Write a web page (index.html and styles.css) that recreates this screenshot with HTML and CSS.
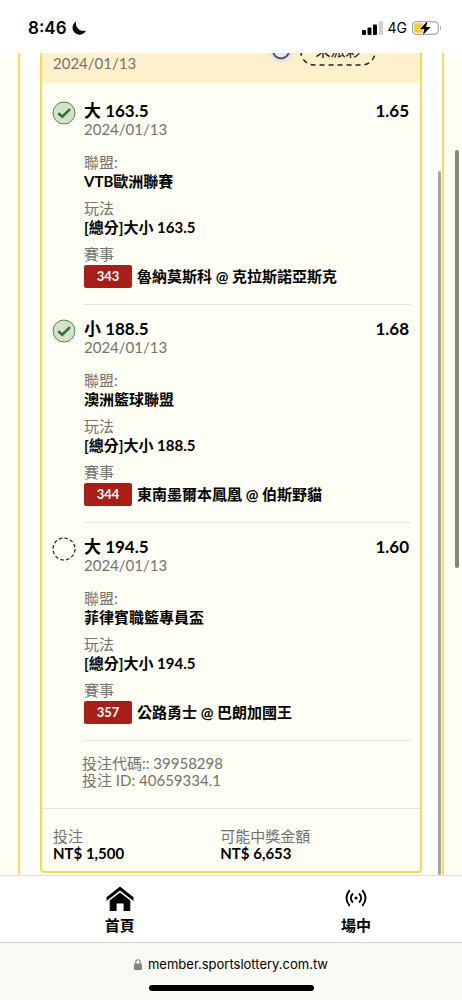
FILE: index.html
```html
<!DOCTYPE html>
<html lang="zh-Hant">
<head>
<meta charset="utf-8">
<meta name="viewport" content="width=device-width, initial-scale=1">
<title>投注紀錄</title>
<link rel="stylesheet" href="styles.css">
</head>
<body>
<header class="status">
  <div class="clock">8:46
    <svg class="moon" viewBox="0 0 14 14" aria-hidden="true"><path d="M4.200.5A7 7 0 1 0 13.900 9.600C9 11.500 2.500 7 4.200.5Z"/></svg>
  </div>
  <div class="signals">
    <svg class="bars" viewBox="0 0 21 14" aria-hidden="true"><rect x="0" y="9" width="4" height="5" rx="1"/><rect x="5.500" y="6.500" width="4" height="7.500" rx="1"/><rect x="11" y="3.500" width="4" height="10.500" rx="1"/><rect x="17" y="0" width="4" height="14" rx="1" fill="#d0d0d0"/></svg>
    <span class="network">4G</span>
    <svg class="battery" viewBox="0 0 30 16" aria-hidden="true"><rect x=".6" y="1.600" width="25.800" height="12.800" rx="3.800" fill="#fff" stroke="#a9a9a9" stroke-width="1.200"/><path d="M4.500 3.200H11V12.800H4.500A2.300 2.300 0 0 1 2.200 10.500V5.500A2.300 2.300 0 0 1 4.500 3.200Z" fill="#f6c93b"/><path d="M28 5.500Q30.200 8 28 10.500Z" fill="#a9a9a9"/><path d="M15.600.8 7.800 9.200H12.300L10.800 15.200 18.700 6.900H14.100Z" stroke="#fff" stroke-width="1.600" paint-order="stroke"/></svg>
  </div>
</header>

<main class="page">
  <div class="frame">
    <article class="ticket">
      <header class="ticket-head">
        <time class="muted" datetime="2024-01-13">2024/01/13</time>
        <div class="head-state">
          <svg class="ring" viewBox="0 0 26 26" aria-hidden="true"><circle cx="13" cy="12" r="12" fill="#e3e6ea"/><circle cx="13" cy="11.500" r="8" fill="none" stroke="#4e535a" stroke-width="2"/></svg>
          <div class="pill"><svg class="pill-line" aria-hidden="true"><rect x="1" y="1" rx="13"/></svg>未派彩</div>
        </div>
      </header>

      <div class="legs">
        <section class="leg">
          <svg class="mark" viewBox="0 0 24 24" aria-label="中獎"><circle cx="12" cy="12" r="11" fill="#d3e2c9" stroke="#4d8a47"/><path d="m6.300 12.200 4 3.500 7.700-7.600" fill="none" stroke="#2f7429" stroke-width="2.700"/></svg>
          <div class="leg-body">
            <div class="leg-title"><h2>大 163.5</h2><strong>1.65</strong></div>
            <time class="muted" datetime="2024-01-13">2024/01/13</time>
            <dl class="facts">
              <div><dt>聯盟:</dt><dd>VTB歐洲聯賽</dd></div>
              <div><dt>玩法</dt><dd>[總分]大小 163.5</dd></div>
              <div><dt>賽事</dt><dd class="match"><span class="badge">343</span>魯納莫斯科 @ 克拉斯諾亞斯克</dd></div>
            </dl>
          </div>
        </section>

        <section class="leg">
          <svg class="mark" viewBox="0 0 24 24" aria-label="中獎"><circle cx="12" cy="12" r="11" fill="#d3e2c9" stroke="#4d8a47"/><path d="m6.300 12.200 4 3.500 7.700-7.600" fill="none" stroke="#2f7429" stroke-width="2.700"/></svg>
          <div class="leg-body">
            <div class="leg-title"><h2>小 188.5</h2><strong>1.68</strong></div>
            <time class="muted" datetime="2024-01-13">2024/01/13</time>
            <dl class="facts">
              <div><dt>聯盟:</dt><dd>澳洲籃球聯盟</dd></div>
              <div><dt>玩法</dt><dd>[總分]大小 188.5</dd></div>
              <div><dt>賽事</dt><dd class="match"><span class="badge">344</span>東南墨爾本鳳凰 @ 伯斯野貓</dd></div>
            </dl>
          </div>
        </section>

        <section class="leg">
          <svg class="mark" viewBox="0 0 24 24" aria-label="未開獎"><circle cx="12" cy="12" r="11" fill="none" stroke="#222" stroke-width="1.200" stroke-dasharray="3.600 2.159"/></svg>
          <div class="leg-body">
            <div class="leg-title"><h2>大 194.5</h2><strong>1.60</strong></div>
            <time class="muted" datetime="2024-01-13">2024/01/13</time>
            <dl class="facts">
              <div><dt>聯盟:</dt><dd>菲律賓職籃專員盃</dd></div>
              <div><dt>玩法</dt><dd>[總分]大小 194.5</dd></div>
              <div><dt>賽事</dt><dd class="match"><span class="badge">357</span>公路勇士 @ 巴朗加國王</dd></div>
            </dl>
          </div>
        </section>
      </div>

      <div class="codes">
        <p>投注代碼:: 39958298</p>
        <p>投注 ID: 40659334.1</p>
      </div>

      <dl class="totals">
        <div><dt>投注</dt><dd>NT$ 1,500</dd></div>
        <div><dt>可能中獎金額</dt><dd>NT$ 6,653</dd></div>
      </dl>
    </article>
  </div>
  <div class="thumb thumb-inner"></div>
  <div class="thumb thumb-outer"></div>
</main>

<nav class="tabs">
  <a href="#home" class="tab">
    <svg class="icon-home" viewBox="0 0 28 26" aria-hidden="true"><path d="M14 .5 27.500 11.300V15L14 4.600.5 15V11.300Z"/><path d="M14 6.600 24.300 14.500V25H17.600V17.500H10.600V25H3.700V14.500Z"/></svg>
    <span>首頁</span>
  </a>
  <a href="#live" class="tab">
    <svg class="icon-live" viewBox="0 0 22 18" aria-hidden="true"><circle cx="11" cy="9" r="1.600"/><g fill="none" stroke="#000" stroke-width="1.800"><path d="M4.700 1.200Q-1.800 9 4.700 16.800M17.300 1.200Q23.800 9 17.300 16.800M8 4.500Q3.600 9 8 13.500M14 4.500Q18.400 9 14 13.500"/></g></svg>
    <span>場中</span>
  </a>
</nav>

<footer class="browser">
  <div class="address">
    <svg class="lock" viewBox="0 0 8 11" aria-hidden="true"><rect y="4.500" width="8" height="6.500" rx="1.200" fill="#85847f"/><path d="M1.800 5V3a2.200 2.200 0 0 1 4.400 0V5" fill="none" stroke="#85847f" stroke-width="1.100"/></svg>
    <span>member.sportslottery.com.tw</span>
  </div>
  <div class="home-bar"></div>
</footer>
</body>
</html>
```

FILE: styles.css
```css
* {
  box-sizing: border-box;
}

body {
  margin: 0;
  height: 100vh;
  display: flex;
  flex-direction: column;
  background: #fff;
  color: #000;
  font-family: Lato, "Noto Sans CJK TC", sans-serif;
  font-size: 15px;
  line-height: 18px;
}

h2, p, dl, dd {
  margin: 0;
}

svg {
  display: block;
  flex: none;
}

/* Status bar */
.status {
  flex: none;
  height: 53px;
  padding: 3px 20px 0 28px;
  display: flex;
  align-items: center;
  justify-content: space-between;
  font-family: Inter, sans-serif;
}

.clock {
  display: flex;
  align-items: center;
  gap: 5px;
  font-size: 17px;
  font-weight: 600;
}

.moon {
  width: 14px;
  height: 14px;
}

.signals {
  display: flex;
  align-items: center;
  gap: 5px;
}

.bars {
  width: 21px;
  height: 14px;
}

.network {
  font-size: 14px;
}

.battery {
  width: 30px;
  height: 16px;
}

/* Scrolled page, resting at its end */
.page {
  position: relative;
  flex: 1;
  min-height: 0;
  overflow: hidden;
  display: flex;
  flex-direction: column;
  justify-content: flex-end;
  padding: 0 18px;
  background: #fefef4;
}

.frame {
  flex: none;
  padding: 0 20px 2px;
  background: #fff;
  border: solid #f5dc60;
  border-width: 0 2px;
}

.ticket {
  overflow: hidden;
  background: #fefef4;
  border: 2px solid #f5da55;
  border-radius: 4px;
}

.ticket-head {
  height: 64px;
  padding: 0 44px 11px 11px;
  display: flex;
  align-items: flex-end;
  justify-content: space-between;
  background: #fdf0cb;
}

.head-state {
  display: flex;
  align-items: center;
  gap: 6px;
  padding-bottom: 6px;
}

.ring {
  width: 26px;
  height: 26px;
}

.pill {
  position: relative;
  width: 76px;
  height: 28px;
  line-height: 25px;
  text-align: center;
}

.pill-line {
  position: absolute;
  inset: 0;
  width: 100%;
  height: 100%;
}

.pill-line rect {
  width: calc(100% - 2px);
  height: calc(100% - 2px);
  fill: none;
  stroke: #222;
  stroke-width: 1.5;
  stroke-dasharray: 5 4;
}

.muted, dt, .codes {
  color: #73736e;
}

.muted {
  display: block;
}

/* Selections */
.legs {
  padding: 4px 9px 0 10px;
}

.leg {
  display: flex;
  gap: 8px;
}

.mark {
  width: 24px;
  height: 24px;
  margin-top: 14px;
}

.leg-body {
  flex: 1;
  padding: 14px 0 16px;
  border-bottom: 1px solid #e4e4dd;
}

.leg-title {
  display: flex;
  justify-content: space-between;
  padding-right: 2px;
  line-height: 19px;
}

.leg-title h2, .leg-title strong {
  font-size: 17px;
  font-weight: 700;
}

.facts {
  display: grid;
  gap: 8px;
  margin-top: 15px;
}

dd {
  font-weight: 700;
}

.facts dd {
  line-height: 20px;
}

.facts .match {
  display: flex;
  align-items: center;
  gap: 5px;
  margin-top: 2px;
  line-height: 23px;
}

.badge {
  width: 48px;
  border-radius: 2px;
  background: #a81e19;
  color: #fff;
  font-size: 13px;
  text-align: center;
}

.codes {
  padding: 14px 40px 19px;
  line-height: 17px;
}

.totals {
  display: grid;
  grid-template-columns: 47% 53%;
  padding: 19px 11px 9px;
  border-top: 1px solid #e4e4dd;
  line-height: 17px;
}

/* Scroll thumbs */
.thumb {
  position: absolute;
  border-radius: 2px;
}

.thumb-inner {
  top: 118px;
  right: 21px;
  bottom: 0;
  width: 3px;
  background: #a4a4a4;
}

.thumb-outer {
  top: 97px;
  right: 3px;
  width: 4px;
  height: 418px;
  background: #858580;
}

/* Bottom tabs */
.tabs {
  flex: none;
  display: flex;
  justify-content: space-between;
  padding: 10px 16% 8px 19%;
  border-top: 1px solid #dededc;
}

.tab {
  width: 64px;
  display: flex;
  flex-direction: column;
  align-items: center;
  justify-content: space-between;
  gap: 4px;
  color: #000;
  font-weight: 700;
  text-decoration: none;
}

.icon-home {
  width: 28px;
  height: 26px;
}

.icon-live {
  width: 22px;
  height: 18px;
  margin-top: 3px;
}

/* Browser bar */
.browser {
  flex: none;
  height: 58px;
  padding-top: 12px;
  display: flex;
  flex-direction: column;
  align-items: center;
  gap: 12px;
  background: #faf9f3;
  border-top: 1px solid #d5d4cf;
}

.address {
  display: flex;
  align-items: center;
  gap: 6px;
  font-family: Inter, sans-serif;
  font-size: 13px;
}

.lock {
  width: 8px;
  height: 11px;
}

.home-bar {
  width: 165px;
  height: 6px;
  border-radius: 3px;
  background: #000;
}
```
